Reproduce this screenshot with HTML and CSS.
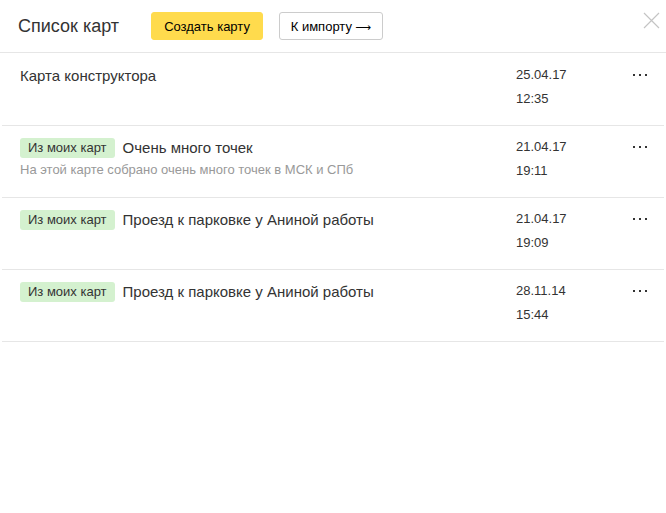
FILE: index.html
```html
<!DOCTYPE html>
<html lang="ru">
<head>
<meta charset="utf-8">
<title>Список карт</title>
<link rel="stylesheet" href="styles.css">
</head>
<body>
<div class="panel">
  <header class="header">
    <h1 class="title">Список карт</h1>
    <button class="btn btn-yellow">Создать карту</button>
    <button class="btn btn-white">К импорту <span class="arrow">⟶</span></button>
    <svg class="close" width="17" height="17" viewBox="0 0 17 17"><path d="M1 1L16 16M16 1L1 16" stroke="#c4c4c4" stroke-width="1.2" fill="none"/></svg>
  </header>
  <ul class="list">
    <li class="row">
      <div class="info">
        <div class="name-line"><span class="name">Карта конструктора</span></div>
      </div>
      <div class="date"><div>25.04.17</div><div>12:35</div></div>
      <div class="more"><i></i><i></i><i></i></div>
    </li>
    <li class="row">
      <div class="info">
        <div class="name-line"><span class="badge">Из моих карт</span><span class="name">Очень много точек</span></div>
        <div class="desc">На этой карте собрано очень много точек в МСК и СПб</div>
      </div>
      <div class="date"><div>21.04.17</div><div>19:11</div></div>
      <div class="more"><i></i><i></i><i></i></div>
    </li>
    <li class="row">
      <div class="info">
        <div class="name-line"><span class="badge">Из моих карт</span><span class="name">Проезд к парковке у Аниной работы</span></div>
      </div>
      <div class="date"><div>21.04.17</div><div>19:09</div></div>
      <div class="more"><i></i><i></i><i></i></div>
    </li>
    <li class="row">
      <div class="info">
        <div class="name-line"><span class="badge">Из моих карт</span><span class="name">Проезд к парковке у Аниной работы</span></div>
      </div>
      <div class="date"><div>28.11.14</div><div>15:44</div></div>
      <div class="more"><i></i><i></i><i></i></div>
    </li>
  </ul>
</div>
</body>
</html>
```
FILE: styles.css
```css
* { box-sizing: border-box; }
html, body { margin: 0; padding: 0; background: #fff; }
body { font-family: "Liberation Sans", Arial, sans-serif; color: #333; }
.panel { width: 666px; height: 513px; position: relative; }
.header {
  height: 53px;
  border-bottom: 1px solid #e6e6e6;
  display: flex;
  align-items: flex-start;
  padding: 12px 0 0 18px;
}
.title {
  margin: 0;
  font-size: 18px;
  font-weight: normal;
  line-height: 28px;
  color: #333;
  margin-right: 32px;
}
.btn {
  height: 28px;
  font-family: inherit;
  font-size: 13px;
  color: #000;
  border-radius: 3px;
  padding: 0 8px;
  cursor: pointer;
  white-space: nowrap;
}
.arrow { font-family: "DejaVu Sans", sans-serif; font-size: 11px; }
.btn-yellow { background: #ffdb4d; border: 1px solid #ffdb4d; width: 112px; margin-right: 16px; }
.btn-white { background: #fff; border: 1px solid #ccc; width: 104px; }
.close { position: absolute; left: 643px; top: 12px; }
.list { list-style: none; margin: 1px 2px 0; padding: 0; }
.row {
  display: grid;
  grid-template-columns: 1fr 100px 48px;
  height: 72px;
  border-bottom: 1px solid #e6e6e6;
  padding: 12px 0 0 18px;
}
.name-line { display: flex; align-items: center; height: 20px; }
.name { font-size: 15px; line-height: 20px; color: #333; }
.badge {
  background: #d4f1cf;
  color: #333;
  font-size: 13px;
  line-height: 20px;
  height: 20px;
  padding: 0 8px;
  border-radius: 3px;
  margin-right: 8px;
}
.desc { margin-top: 4px; font-size: 13px; line-height: 16px; color: #999; }
.date { font-size: 13px; line-height: 24px; color: #333; margin-top: -3px; }
.more { display: flex; gap: 4px; padding: 8px 0 0 17px; }
.more i { display: block; width: 2px; height: 2px; background: #333; }
```
